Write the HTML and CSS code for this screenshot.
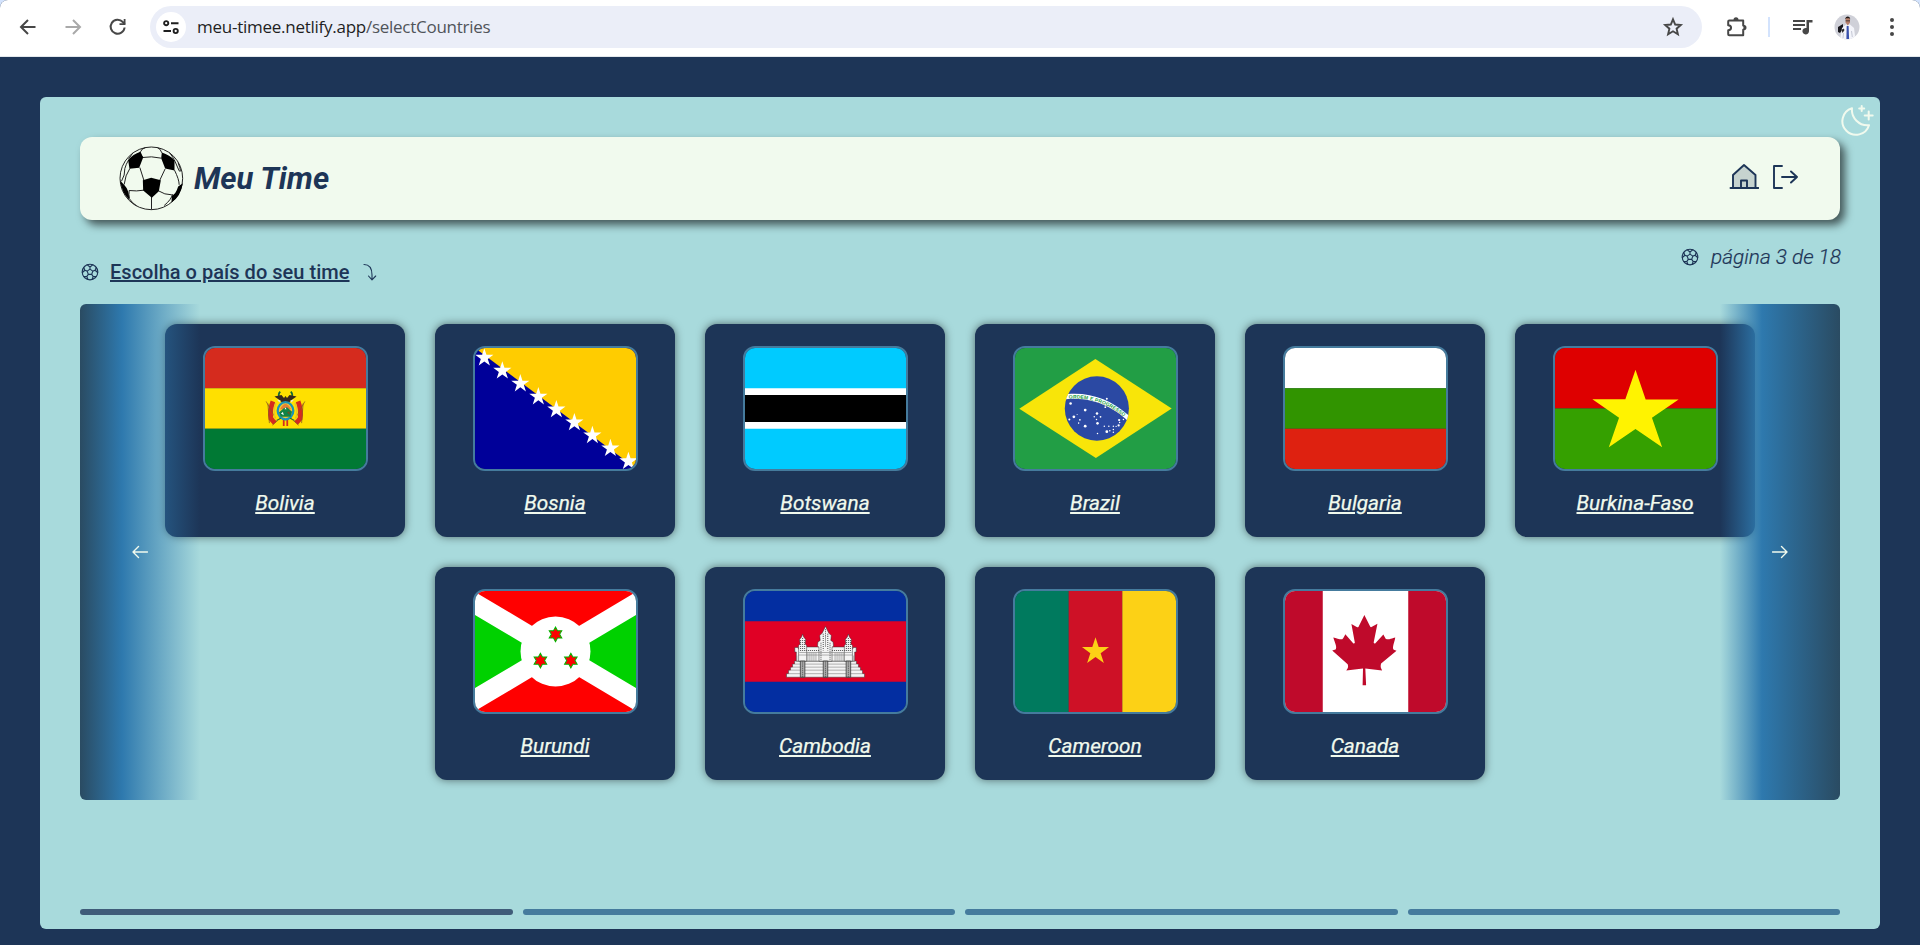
FILE: index.html
```html
<!DOCTYPE html>
<html lang="pt-BR">
<head>
<meta charset="utf-8">
<title>Meu Time</title>
<link rel="stylesheet" href="styles.css">
</head>
<body>
<svg class="defs" width="0" height="0" aria-hidden="true">
  <defs>
    <symbol id="ball" viewBox="0 0 18 18">
      <g fill="none" stroke="currentColor" stroke-width="1.15" stroke-linejoin="round" stroke-linecap="round">
        <circle cx="9" cy="9" r="7.8"/>
        <path d="M9 6.1l2.8 2-1.1 3.3H7.3L6.2 8.1zM9 6.1V4M11.8 8.1l2.3-.8M10.700 11.400l1.400 2M7.300 11.400l-1.400 2M6.200 8.100l-2.300-.8M6.300 1.900L9 4l2.700-2.100M15.300 4.500l-1.200 2.800 2.500 2.200M15.300 13.500l-3.200-.1-.8 3M2.700 13.500l3.200-.1.8 3M2.700 4.500l1.200 2.800-2.500 2.200"/>
      </g>
    </symbol>
    <polygon id="star" points="0,-1 .2245,-.309 .951,-.309 .363,.118 .588,.809 0,.382 -.588,.809 -.363,.118 -.951,-.309 -.2245,-.309"/>
    <polygon id="star6" points="0,-29 8,-14.500 25,-14.500 16.500,0 25,14.500 8,14.500 0,29 -8,14.500 -25,14.500 -16.500,0 -25,-14.500 -8,-14.500"/>
  </defs>
</svg>

<div class="toolbar">
  <svg class="tool back" width="24" height="24" viewBox="0 0 24 24"><path d="M19.500 12H5.500M12 5l-7 7 7 7" fill="none" stroke="#474747" stroke-width="2"/></svg>
  <svg class="tool forward" width="24" height="24" viewBox="0 0 24 24"><path d="M4.500 12h14M12 5l7 7-7 7" fill="none" stroke="#a9a9a9" stroke-width="2"/></svg>
  <svg class="tool reload" width="24" height="24" viewBox="0 0 24 24"><path d="M18.600 12.500A7 7 0 1 1 16.800 7l2 2" fill="none" stroke="#474747" stroke-width="2"/><path d="M19.500 4v6h-6V8.200h4.200V4z" fill="#474747"/></svg>
  <div class="omnibox">
    <span class="site-info">
      <svg width="18" height="16" viewBox="0 0 18 16" fill="none" stroke="#1f1f1f" stroke-width="1.900"><circle cx="4.200" cy="4.200" r="2.100"/><path d="M9 4.200h7.500M1.500 12h7.500"/><circle cx="13.700" cy="12" r="2.100"/></svg>
    </span>
    <span class="url">meu-timee.netlify.app<span class="url-path">/selectCountries</span></span>
    <svg class="bookmark" width="22" height="22" viewBox="0 0 22 22"><path d="M11 3.300l2.200 5.200 5.600.5-4.200 3.700 1.300 5.500-4.900-2.900-4.900 2.900 1.300-5.500L3.200 9l5.600-.5z" fill="none" stroke="#474747" stroke-width="1.900"/></svg>
  </div>
  <svg class="puzzle" width="24" height="24" viewBox="0 0 24 24"><path d="M4.200 5.500h14v5c1.700.3 1.700 4 0 4.300v5.500h-14a1 1 0 0 1-1-1v-4c3.800-.2 3.800-4.700 0-5v-3.800a1 1 0 0 1 1-1z" fill="none" stroke="#474747" stroke-width="2" stroke-linejoin="round"/><path d="M8.500 5a2.500 2.700 0 0 1 5 0zM19 10a2.500 2.600 0 0 1 0 5.200z" fill="#474747"/></svg>
  <span class="divider"></span>
  <svg class="queue" width="24" height="24" viewBox="0 0 24 24" fill="#474747"><path d="M2 5h12v2H2zM2 9h12v2H2zM2 13h8v2H2zM15.500 5h6v2.500h-3.500V16a3.300 3.300 0 1 1-2.500-3z"/></svg>
  <svg class="avatar" width="26" height="26" viewBox="0 0 26 26">
    <clipPath id="face"><circle cx="13" cy="13" r="12.500"/></clipPath>
    <g clip-path="url(#face)"><rect width="26" height="26" fill="#cfd0d8"/><path d="M4 13l5-3v5l-3 4-2-1z" fill="#17171d"/><path d="M6 26l2-12 4-3.500h4l4 3.500 1.500 12z" fill="#f3f4fa"/><path d="M12.700 12h1.900l.5 13h-2.700z" fill="#3850ad"/><path d="M7.500 16l2-1.500 1 1.500-2 3z" fill="#2b2a30"/><path d="M11.600 4h4.400v4.500l-2.200 3-2.200-3z" fill="#b57e6a"/><path d="M11.300 5.600c-.3-4.300 5.200-4.300 4.900 0l-.7-1.300h-3.300z" fill="#1c1616"/><path d="M11.600 6.400H16v.8h-4.400z" fill="#2b2020"/><path d="M17.500 17l.8 6M9.500 19l-.5 5" stroke="#b9bccb" stroke-width=".8"/></g>
  </svg>
  <svg class="dots" width="6" height="20" viewBox="0 0 6 20" fill="#474747"><circle cx="3" cy="3" r="2"/><circle cx="3" cy="10" r="2"/><circle cx="3" cy="17" r="2"/></svg>
</div>

<div class="page">
  <div class="panel">
    <svg class="theme" width="34" height="34" viewBox="0 0 34 34" fill="none" stroke="#f1faee" stroke-width="2" stroke-linecap="round" stroke-linejoin="round"><path d="M12 4.200A13.600 13.600 0 1 0 29 21.200 15.500 15.500 0 0 1 12 4.200z"/><path d="M21.700 2v5M19.200 4.500h5M28.700 7.500v8M24.700 11.500h8"/></svg>

    <header class="header">
      <svg class="logo" width="65" height="65" viewBox="355.500 437.500 195 195">
        <g fill="none" stroke="#222" stroke-width="3">
          <circle cx="452.500" cy="534.500" r="94"/>
          <path d="M426 472q26-5 56 2M418 502l12 38M494 506l-16 34M418 455q0 10 10 17M420 455q3-10 16-13M484 458q-4-13-14-16M388 505q-14 20-17 48M385 478q-9 15-12 27 1 20-10 38M398 457l-14 20M430 570q-22 4-44 1M453 590v38M474 572q18 12 40 12M522 510q14 28 14 44M533 488q12 32 3 24l-15-34M386 571q-2 12 1 24M386 595q10 14 22 22M516 582q-3 16-25 34M507 457l14 20"/>
        </g>
        <path d="M427 540l25-7 29 7-6 33-21 20-26-22zM383 480q14-18 37-25l8 17-12 31-29 3zM484 457q24 8 38 23v31l-28-6-12-31zM359 541l13 14q14 14 14 43-22-19-27-57zM547 549l-14 10q-7 23-19 28l-1 20q28-19 34-58z"/>
      </svg>
      <h1 class="brand">Meu Time</h1>
      <nav class="nav">
        <svg width="30" height="28" viewBox="0 0 30 28" fill="none" stroke="#1d3557" stroke-width="1.900" stroke-linejoin="round" stroke-linecap="round"><path d="M4 25V12L15 2l11.500 10v13z" fill="#1d3557" fill-opacity=".2"/><path d="M1.500 25h28M12 25v-7.500h6V25" /></svg>
        <svg width="26" height="28" viewBox="0 0 26 28" fill="none" stroke="#1d3557" stroke-width="1.900" stroke-linejoin="round" stroke-linecap="round"><path d="M10 3H2v22h8M10 14h15M19 8.500l6 5.500-6 5.500"/></svg>
      </nav>
    </header>

    <div class="info">
      <div class="choose">
        <svg class="ball" width="18" height="18"><use href="#ball"/></svg>
        <h2>Escolha o país do seu time</h2>
        <svg width="14" height="18" viewBox="0 0 14 18" fill="none" stroke="#1d3557" stroke-width="1.100" stroke-linecap="round" stroke-linejoin="round"><path d="M1 1.500c5.500 0 8 4 8 10.500v4.500M5.500 13L9 16.800 12.700 13"/></svg>
      </div>
      <div class="count"><svg class="ball" width="18" height="18"><use href="#ball"/></svg><span>página 3 de 18</span></div>
    </div>

    <div class="slider">
      <div class="cards">
        <a class="card"><svg class="flag" viewBox="0 0 640 480" preserveAspectRatio="none">
          <path fill="#d52b1e" d="M0 0h640v160H0z"/><path fill="#ffe000" d="M0 160h640v160H0z"/><path fill="#007934" d="M0 320h640v160H0z"/>
          <g fill="none" stroke="#d52b1e" stroke-width="19"><path d="M270 212q-14 36-8 68l16 18M370 212q14 36 8 68l-16 18"/></g>
          <g fill="none" stroke="#8a5524" stroke-width="3"><path d="M243 212l36 64M397 212l-36 64M268 306l34-30M372 306l-34-30M250 220l6 78M390 220l-6 78"/></g>
          <g fill="none" stroke="#e8c42a" stroke-width="6"><path d="M282 218q-12 28-3 64M358 218q12 28 3 64"/></g>
          <g stroke="#d52b1e" stroke-width="7"><path d="M313 280v29M327 280v29"/></g>
          <path d="M299 173q-10 10-3 26M341 173q10 10 3 26" fill="none" stroke="#126b38" stroke-width="7"/>
          <path d="M276 192l28-6 10 12 6-8 6 8 10-12 28 6-20 14-12 12-12-6-12 6-12-12z" fill="#38291c"/>
          <path d="M286 204l15 4-5 8zM354 204l-15 4 5 8z" fill="#e9e4d2"/>
          <ellipse cx="320" cy="249" rx="31" ry="34" fill="#f9c82b" stroke="#1b94b7" stroke-width="9"/>
          <path d="M298 243q22-42 44 0z" fill="#e58136"/><path d="M294 256l19-17 13-4 20 18-6 20h-39z" fill="#128246"/><path d="M302 260l8-6 3 13zM320 236l4 7h-8z" fill="#fff"/><path d="M326 256l9-5 2 14z" fill="#735024"/>
          <path d="M284 287l18-8M338 279l18 8" stroke="#276a38" stroke-width="4" fill="none"/>
        </svg><span>Bolivia</span></a>

        <a class="card"><svg class="flag" viewBox="0 0 640 480" preserveAspectRatio="none">
          <path fill="#009" d="M0 0h640v480H0z"/><path fill="#fc0" d="M0 0h640v478z"/>
          <g fill="#fff">
            <use href="#star" transform="translate(37 39) scale(38)"/><use href="#star" transform="translate(108.600 90.300) scale(38)"/><use href="#star" transform="translate(180.200 141.600) scale(38)"/><use href="#star" transform="translate(251.800 192.900) scale(38)"/><use href="#star" transform="translate(323.400 244.200) scale(38)"/><use href="#star" transform="translate(395 295.500) scale(38)"/><use href="#star" transform="translate(466.600 346.800) scale(38)"/><use href="#star" transform="translate(538.200 398.100) scale(38)"/><use href="#star" transform="translate(609.800 449.400) scale(38)"/>
          </g>
        </svg><span>Bosnia</span></a>

        <a class="card"><svg class="flag" viewBox="0 0 640 480" preserveAspectRatio="none">
          <path fill="#00cbff" d="M0 0h640v480H0z"/><path fill="#fff" d="M0 160h640v160H0z"/><path d="M0 186h640v108H0z"/>
        </svg><span>Botswana</span></a>

        <a class="card"><svg class="flag" viewBox="0 0 640 480" preserveAspectRatio="none">
          <path fill="#229e45" d="M0 0h640v480H0z"/><path fill="#f8e509" d="M321.400 436l301.500-195.700L319.600 44 17.100 240.700z"/>
          <circle cx="325.400" cy="240" r="127.500" fill="#2b49a3"/>
          <path fill="#fff" d="M444.400 285.800a125 125 0 0 0 5.800-19.800c-67.800-59.500-143.300-90-238.700-83.700a125 125 0 0 0-8.500 20.900c113-10.800 196 39.200 241.400 82.600"/>
          <path id="band" fill="none" d="M214 200.500c96-4 165 26 228 79"/>
          <text class="motto"><textPath href="#band" textLength="236">ORDEM E PROGRESSO</textPath></text>
          <g fill="#fff"><circle cx="221" cy="220" r="5"/><circle cx="279" cy="246" r="5.500"/><circle cx="365" cy="201" r="4"/><circle cx="359" cy="235" r="3.500"/><circle cx="326" cy="260" r="5"/><circle cx="315" cy="273" r="3"/><circle cx="340" cy="273" r="3.500"/><circle cx="324" cy="284" r="3"/><circle cx="328" cy="299" r="5"/><circle cx="234" cy="273" r="5.500"/><circle cx="216" cy="284" r="4"/><circle cx="247" cy="264" r="2"/><circle cx="258" cy="285" r="3.500"/><circle cx="253" cy="298" r="3"/><circle cx="279" cy="310" r="5.500"/><circle cx="355" cy="310" r="3"/><circle cx="373" cy="310" r="3"/><circle cx="391" cy="310" r="3"/><circle cx="402" cy="311" r="2.500"/><circle cx="412" cy="307" r="4.500"/><circle cx="414" cy="286" r="4.500"/><circle cx="431" cy="284" r="3"/><circle cx="416" cy="296" r="3"/><circle cx="391" cy="323" r="3"/><circle cx="391" cy="334" r="3"/><circle cx="365" cy="332" r="5.500"/><circle cx="377" cy="328" r="3"/><circle cx="328" cy="339" r="3"/></g>
        </svg><span>Brazil</span></a>

        <a class="card"><svg class="flag" viewBox="0 0 640 480" preserveAspectRatio="none">
          <path fill="#fff" d="M0 0h640v160H0z"/><path fill="#319400" d="M0 160h640v160H0z"/><path fill="#de2110" d="M0 320h640v160H0z"/>
        </svg><span>Bulgaria</span></a>

        <a class="card"><svg class="flag" viewBox="0 0 640 480" preserveAspectRatio="none">
          <path fill="#de0000" d="M0 0h640v240H0z"/><path fill="#35a000" d="M0 240h640v240H0z"/><path fill="#fff300" d="M254.600 276.200l-106-72.400h131L320 86.600 360.400 204l131-.1-106 72.400 40.500 117.300-106-72.500-106 72.500z"/>
        </svg><span>Burkina-Faso</span></a>

        <a class="card"><svg class="flag" viewBox="0 0 640 480" preserveAspectRatio="none">
          <path fill="#fff" d="M0 0h640v480H0z"/><path fill="#f00" d="M-6 0h652L320 194zM-6 480h652L320 286z"/><path fill="#00d100" d="M0 95l244 145L0 385zM640 95L396 240l244 145z"/><circle cx="320" cy="240" r="139" fill="#fff"/>
          <g fill="#f00" stroke="#00b800" stroke-width="4"><use href="#star6" transform="translate(320 172)"/><use href="#star6" transform="translate(260 276)"/><use href="#star6" transform="translate(381 276)"/></g>
        </svg><span>Burundi</span></a>

        <a class="card"><svg class="flag" viewBox="0 0 640 480" preserveAspectRatio="none">
          <path fill="#032ea1" d="M0 0h640v480H0z"/><path fill="#e00025" d="M0 120h640v240H0z"/>
          <g fill="#f4f4f4" stroke="#333" stroke-width="2">
            <path d="M165 342v-14h8v-14h8v-12h8v-12h8v-12h246v12h8v12h8v12h8v14h8v14z"/>
            <path d="M204 278v-36h-6v-18h14v6h18v-8h182v8h17v-6h13v18h-6v36z"/>
            <path d="M213 242v-26l6-6-2-18 8-10 4-11 4 11 8 10-2 18 6 6v62h-32zM395 278v-62l6-6-2-18 8-10 4-11 4 11 8 10-2 18 6 6v62z"/>
            <path d="M294 278v-55l-6-5 2-16 9-6-2-19 10-10 7-14 6-13 6 13 7 14 10 10-2 19 9 6 2 16-6 5v55z"/>
          </g>
          <g fill="none" stroke="#777" stroke-width="2.200">
            <path d="M174 328h292M182 314h276M190 302h260M198 290h244M216 244h208M212 254h216M250 244v34M258 244v34M266 244v34M274 244v34M282 244v34M358 244v34M366 244v34M374 244v34M382 244v34M390 244v34M206 256v22M432 256v22"/>
          </g>
          <g fill="#aaa" stroke="#333" stroke-width="3"><path d="M220 278h18v64h-18zM311 278h18v64h-18zM402 278h18v64h-18z"/></g>
          <g fill="none" stroke="#555" stroke-width="4" stroke-dasharray="4 4"><path d="M229 186v52M221 194v44M237 194v44M320 152v68M311 170v66M329 170v66M302 205v70M338 205v70M403 194v44M411 186v52M419 194v44M242 236h52M346 236h52M229 280v60M320 280v60M411 280v60"/></g>
        </svg><span>Cambodia</span></a>

        <a class="card"><svg class="flag" viewBox="0 0 640 480" preserveAspectRatio="none">
          <path fill="#007a5e" d="M0 0h214v480H0z"/><path fill="#ce1126" d="M213.300 0h214v480h-214z"/><path fill="#fcd116" d="M426.700 0H640v480H426.700z"/><use href="#star" fill="#fcd116" transform="translate(320 240) scale(56.500)"/>
        </svg><span>Cameroon</span></a>

        <a class="card"><svg class="flag" viewBox="0 0 640 480" preserveAspectRatio="none">
          <path fill="#fff" d="M0 0h640v480H0z"/><path fill="#bf0a2b" d="M0 0h150.100v480H0zM489.900 0H640v480H489.900zM201 232l-13.300 4.400 61.400 54c4.700 13.700-1.600 17.800-5.600 25l66.600-8.400-1.600 67 13.900-.3-3.100-66.600 66.700 8c-4.100-8.700-7.800-13.300-4-27.200l61.300-51-10.700-4c-8.800-6.800 3.800-32.600 5.600-48.900 0 0-35.700 12.300-38 5.800l-9.200-17.500-32.600 35.800c-3.500.9-5-.5-5.900-3.500l15-74.800-23.800 13.400q-3.200 1.300-5.200-2.200l-23-46-23.600 47.800q-2.800 2.500-5 .7L264 130.800l13.700 74.100c-1.100 3-3.700 3.800-6.700 2.200l-31.200-35.300c-4 6.500-6.800 17.100-12.200 19.500s-23.500-4.500-35.600-7c4.200 14.800 17 39.600 9 47.700"/>
        </svg><span>Canada</span></a>
      </div>
      <div class="edge prev"><svg width="16" height="14" viewBox="0 0 16 14" fill="none" stroke="#f1faee" stroke-width="1.400" stroke-linecap="round" stroke-linejoin="round"><path d="M15.500 7H1M6.500 1.500L1 7l5.500 5.500"/></svg></div>
      <div class="edge next"><svg width="16" height="14" viewBox="0 0 16 14" fill="none" stroke="#f1faee" stroke-width="1.400" stroke-linecap="round" stroke-linejoin="round"><path d="M.5 7H15M9.500 1.500L15 7l-5.500 5.500"/></svg></div>
    </div>

    <div class="pager"><span class="current"></span><span></span><span></span><span></span></div>
  </div>
</div>
</body>
</html>
```
FILE: styles.css
```css
* { box-sizing: border-box; }
body { margin: 0; height: 945px; overflow: hidden; display: flex; flex-direction: column; background: #1d3557; color: #1d3557; font-family: Roboto, "Liberation Sans", sans-serif; }
svg { display: block; flex: none; }
h1, h2 { margin: 0; }
.defs { position: absolute; }

.toolbar { height: 57px; flex: none; display: flex; align-items: center; padding: 0 25px 2px 16px; background: linear-gradient(#fff, #fff) padding-box; border-bottom: 1px solid #e3e8ec; border-radius: 8px 8px 0 0; box-shadow: 0 -10px 0 10px #d3e3fd; clip-path: inset(0); }
.forward { margin-left: 21px; }
.reload { margin-left: 21px; }
.omnibox { width: 1552px; height: 42px; margin-left: 20px; padding: 0 18px 0 6px; display: flex; align-items: center; border-radius: 21px; background: #ebeef8; }
.site-info { width: 30px; height: 30px; display: grid; place-items: center; border-radius: 50%; background: #fff; }
.url { margin-left: 11px; font: 17px/24px "Open Sans", sans-serif; letter-spacing: -.26px; color: #1f1f1f; white-space: nowrap; }
.url-path { color: #50545a; }
.bookmark { margin-left: auto; }
.puzzle { margin-left: 23px; }
.divider { width: 2px; height: 20px; margin-left: 19px; background: #d3e3fd; }
.queue { margin-left: 21px; }
.avatar { margin-left: 19px; }
.dots { margin-left: auto; }

.page { flex: 1; padding: 40px 40px 16px; }
.panel { position: relative; height: 832px; padding: 40px 40px 14px; display: flex; flex-direction: column; border-radius: 6px; background: #a8dadc; }
.theme { position: absolute; top: 7px; right: 6px; }
.header { height: 83px; flex: none; display: flex; align-items: center; padding: 0 42px 0 38.500px; border-radius: 12px; background: #f1faee; box-shadow: 5px 5px 8px rgba(0, 0, 0, .6); }
.brand { margin-left: 10.500px; font-size: 31px; font-weight: 700; font-style: italic; line-height: 40px; }
.nav { margin-left: auto; padding-bottom: 4px; display: flex; gap: 13px; }

.info { height: 84px; flex: none; display: flex; justify-content: space-between; align-items: flex-start; padding-top: 25px; }
.choose { display: flex; align-items: center; margin-top: 15px; padding-left: 1px; }
.choose h2 { margin: 0 13px 0 11px; font-size: 20px; font-weight: 500; line-height: 24px; letter-spacing: .03px; text-decoration: underline; }
.count { display: flex; align-items: center; gap: 12px; margin-right: -1px; font-size: 20.8px; font-weight: 300; font-style: italic; line-height: 24px; -webkit-text-stroke: .2px; }

.slider { position: relative; height: 496px; flex: none; padding: 20px 0; }
.cards { display: flex; flex-wrap: wrap; justify-content: center; gap: 30px; }
.card { width: 240px; height: 213px; display: flex; flex-direction: column; align-items: center; padding-top: 22px; border-radius: 12px; background: #1d3557; box-shadow: 0 0 8px rgba(0, 0, 0, .5); color: #f1faee; }
.card span { margin-top: 20px; font-size: 20.8px; font-weight: 400; font-style: italic; line-height: 24px; text-decoration: underline; -webkit-text-stroke: .25px; }
.flag { width: 165px; height: 125px; border: 2px solid #457b9d; border-radius: 12px; overflow: hidden; }
.motto { font: 700 20px "Liberation Sans", sans-serif; fill: #229e45; }
.edge { position: absolute; top: 0; bottom: 0; width: 120px; display: grid; place-items: center; }
.prev { left: 0; border-radius: 6px 0 0 6px; background: linear-gradient(90deg, #2a4b62, #2e79ae 35%, rgba(46, 121, 174, 0)); }
.next { right: 0; border-radius: 0 6px 6px 0; background: linear-gradient(90deg, rgba(46, 121, 174, 0), #2e79ae 35%, #2a4b62); }

.pager { margin-top: auto; display: flex; gap: 10px; }
.pager span { flex: 1; height: 6px; border-radius: 3px; background: #457b9d; }
.pager .current { background: #3f5c79; }
```
